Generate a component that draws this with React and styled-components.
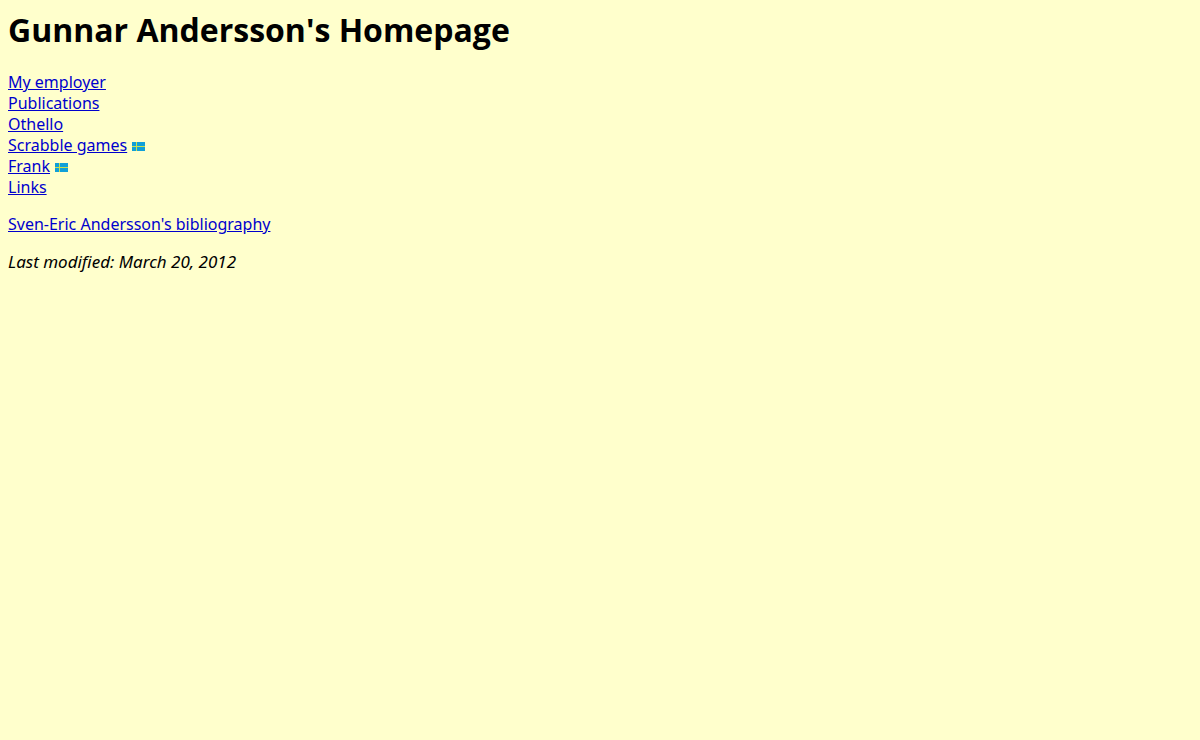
import React from "react";
import styled, { createGlobalStyle } from "styled-components";

const links = [
  { label: "My employer", href: "#employer" },
  { label: "Publications", href: "#publications" },
  { label: "Othello", href: "#othello" },
  { label: "Scrabble games", href: "#scrabble", swedish: true },
  { label: "Frank", href: "#frank", swedish: true },
  { label: "Links", href: "#links" },
];

const SwedishFlag = () => (
  <Flag viewBox="0 0 13 9" role="img" aria-label="In Swedish">
    <rect width="13" height="9" fill="#10a0d8" />
    <path d="M4 0h1v9H4zM0 4h13v1H0z" fill="#c8e050" />
  </Flag>
);

export default function App() {
  return (
    <>
      <GlobalStyle />
      <Page>
        <Title>Gunnar Andersson's Homepage</Title>
        <LinkList>
          {links.map((link) => (
            <LinkItem key={link.href}>
              <PageLink href={link.href}>{link.label}</PageLink>
              {link.swedish && <SwedishFlag />}
            </LinkItem>
          ))}
        </LinkList>
        <Paragraph>
          <PageLink href="#bibliography">
            Sven-Eric Andersson's bibliography
          </PageLink>
        </Paragraph>
        <Modified>Last modified: March 20, 2012</Modified>
      </Page>
    </>
  );
}

const GlobalStyle = createGlobalStyle`
  body {
    margin: 0;
    background-color: #ffffcc;
    color: #000;
    font-family: "Noto Sans", "Segoe UI", sans-serif;
    font-size: 16px;
    line-height: 21px;
  }
`;

const Page = styled.main`
  padding: 8px;
`;

const Title = styled.h1`
  margin: 0 0 21px;
  font-family: "Open Sans", "Segoe UI", sans-serif;
  font-size: 32px;
  line-height: 43px;
`;

const LinkList = styled.ul`
  margin: 0 0 16px;
  padding: 0;
  list-style: none;
`;

const LinkItem = styled.li`
  display: flex;
  align-items: baseline;
  gap: 5px;
`;

const PageLink = styled.a`
  color: #0000cc;
  text-decoration: underline;
`;

const Flag = styled.svg`
  width: 13px;
  height: 9px;
`;

const Paragraph = styled.p`
  margin: 0 0 16px;
`;

const Modified = styled(Paragraph)`
  font-size: 17px;
  font-style: italic;
`;
